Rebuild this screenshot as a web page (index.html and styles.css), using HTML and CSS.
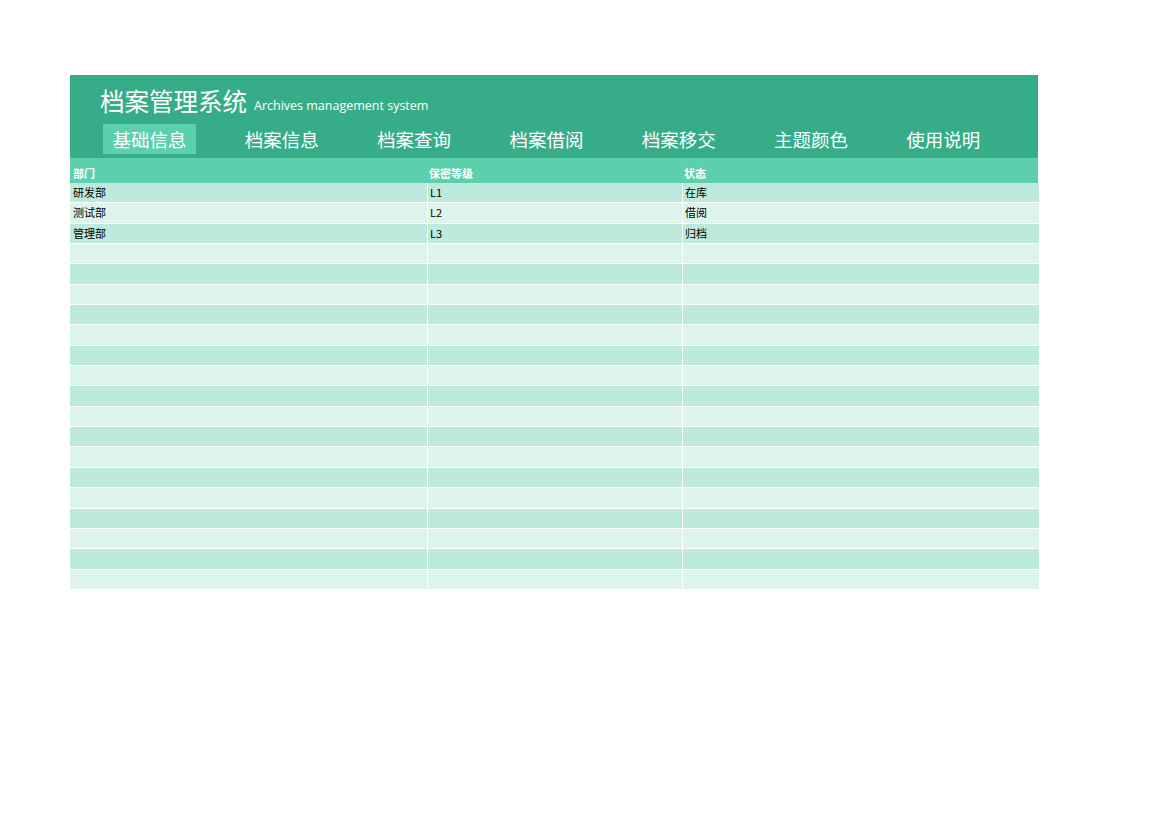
FILE: index.html
```html
<!DOCTYPE html>
<html lang="zh">
<head>
<meta charset="utf-8">
<title>档案管理系统</title>
<link rel="stylesheet" href="styles.css">
</head>
<body>
<div class="sheet">
  <header class="banner">
    <div class="title-row">
      <span class="title">档案管理系统</span>
      <span class="subtitle">Archives management system</span>
    </div>
    <nav class="nav">
      <span class="nav-item active">基础信息</span>
      <span class="nav-item">档案信息</span>
      <span class="nav-item">档案查询</span>
      <span class="nav-item">档案借阅</span>
      <span class="nav-item">档案移交</span>
      <span class="nav-item">主题颜色</span>
      <span class="nav-item">使用说明</span>
    </nav>
  </header>
  <div class="thead">
    <div class="th">部门</div>
    <div class="th">保密等级</div>
    <div class="th">状态</div>
  </div>
  <div class="tbody">
    <div class="row"><div class="td">研发部</div><div class="td">L1</div><div class="td">在库</div></div>
    <div class="row"><div class="td">测试部</div><div class="td">L2</div><div class="td">借阅</div></div>
    <div class="row"><div class="td">管理部</div><div class="td">L3</div><div class="td">归档</div></div>
    <div class="row"><div class="td"></div><div class="td"></div><div class="td"></div></div>
    <div class="row"><div class="td"></div><div class="td"></div><div class="td"></div></div>
    <div class="row"><div class="td"></div><div class="td"></div><div class="td"></div></div>
    <div class="row"><div class="td"></div><div class="td"></div><div class="td"></div></div>
    <div class="row"><div class="td"></div><div class="td"></div><div class="td"></div></div>
    <div class="row"><div class="td"></div><div class="td"></div><div class="td"></div></div>
    <div class="row"><div class="td"></div><div class="td"></div><div class="td"></div></div>
    <div class="row"><div class="td"></div><div class="td"></div><div class="td"></div></div>
    <div class="row"><div class="td"></div><div class="td"></div><div class="td"></div></div>
    <div class="row"><div class="td"></div><div class="td"></div><div class="td"></div></div>
    <div class="row"><div class="td"></div><div class="td"></div><div class="td"></div></div>
    <div class="row"><div class="td"></div><div class="td"></div><div class="td"></div></div>
    <div class="row"><div class="td"></div><div class="td"></div><div class="td"></div></div>
    <div class="row"><div class="td"></div><div class="td"></div><div class="td"></div></div>
    <div class="row"><div class="td"></div><div class="td"></div><div class="td"></div></div>
    <div class="row"><div class="td"></div><div class="td"></div><div class="td"></div></div>
    <div class="row"><div class="td"></div><div class="td"></div><div class="td"></div></div>
  </div>
</div>
</body>
</html>
```

FILE: styles.css
```css
html, body {
  margin: 0;
  padding: 0;
  background: #ffffff;
}

body {
  font-family: "Noto Sans CJK SC", "Noto Sans", sans-serif;
}

.sheet {
  margin: 75px 0 0 70px;
  width: 968px;
}

.banner {
  background: #36ad88;
  height: 83px;
  color: #ffffff;
}

.title-row {
  height: 41px;
  padding-left: 30px;
  display: flex;
  align-items: flex-end;
  gap: 7px;
}

.title {
  font-size: 24.5px;
  line-height: 30px;
  letter-spacing: 0;
}

.subtitle {
  font-family: "Open Sans", "Noto Sans", sans-serif;
  font-size: 12.5px;
  line-height: 20px;
}

.nav {
  display: flex;
  gap: 39.3px;
  padding: 8px 0 0 33px;
}

.nav-item {
  width: 93px;
  height: 30px;
  line-height: 30px;
  text-align: center;
  font-size: 18.5px;
  flex: none;
}

.nav-item.active {
  background: #5ccfad;
}

.thead {
  display: grid;
  grid-template-columns: 357px 255px 356px;
  background: #5ccfad;
  height: 25px;
}

.th {
  color: #ffffff;
  font-weight: bold;
  font-size: 11px;
  line-height: 11px;
  padding: 10px 0 0 3px;
}

.th + .th {
  padding-left: 2px;
}

.tbody {
  display: grid;
  grid-auto-rows: 19.35px;
  row-gap: 1px;
  background: #ffffff;
}

.row {
  display: grid;
  grid-template-columns: 357px 254px 356px;
  column-gap: 1px;
}

.td {
  background: #bdeadc;
  font-size: 11px;
  line-height: 19px;
  color: #000000;
  padding-left: 3px;
}

.td + .td {
  padding-left: 2px;
}

.row:nth-child(even) .td {
  background: #ddf4ec;
}
```
